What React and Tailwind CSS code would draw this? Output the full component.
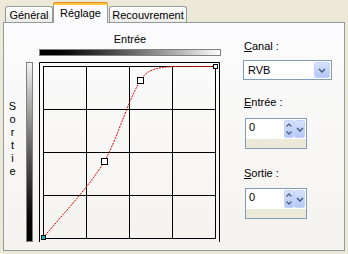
import React from "react";

function Chevron({ className = "" }) {
  return (
    <svg width="8" height="5" viewBox="0 0 8 5" className={className}>
      <path d="M1 1l3 3 3-3" fill="none" stroke="#4D6185" strokeWidth="1.6" />
    </svg>
  );
}

function UpDown() {
  return (
    <div className="w-[10px] h-[18px] my-[1px] flex flex-col items-center justify-around rounded-[2px] border border-[#C3D3FD] bg-gradient-to-b from-[#D8E3FC] to-[#B4C7F4]">
      <svg width="6" height="4" viewBox="0 0 6 4">
        <path d="M0.5 3.5l2.5-2.5 2.5 2.5" fill="none" stroke="#4D6185" strokeWidth="1.3" />
      </svg>
      <svg width="6" height="4" viewBox="0 0 6 4">
        <path d="M0.5 0.5l2.5 2.5 2.5-2.5" fill="none" stroke="#4D6185" strokeWidth="1.3" />
      </svg>
    </div>
  );
}

function Spin() {
  return (
    <div className="ml-[2px] w-[62px] h-[31px] border border-[#7F9DB9] flex flex-col">
      <div className="h-[20px] bg-white flex">
        <div className="flex-1 pl-[3px] pt-[2px]">0</div>
        <UpDown />
        <div className="w-[11px] h-[18px] my-[1px] mr-[1px] flex items-center justify-center rounded-[2px] border border-[#C3D3FD] bg-gradient-to-b from-[#D8E3FC] to-[#B4C7F4]">
          <Chevron />
        </div>
      </div>
      <div className="flex-1 bg-[#ECE9D8]" />
    </div>
  );
}

function Graph() {
  const grid = [4.5, 47.5, 90.5, 133.5, 176.5];
  return (
    <svg width="182" height="180" className="block mt-[6px]">
      <path d="M0.5 180V0.5H180.5V180" fill="none" stroke="#000" />
      {grid.map((v) => (
        <line key={"v" + v} x1={v} y1="4" x2={v} y2="177" stroke="#000" />
      ))}
      {grid.map((v) => (
        <line key={"h" + v} x1="4" y1={v} x2="177" y2={v} stroke="#000" />
      ))}
      <path
        d="M4 176C26 150 51 123 65.5 99.5C79 75 89 38 101.5 18.5C107 8 118 5 136 4.5L176 4.5"
        fill="none"
        stroke="#E00000"
        strokeDasharray="2 1"
      />
      <rect x="62.5" y="96.5" width="6" height="6" fill="#fff" stroke="#000" />
      <rect x="98.5" y="15.5" width="6" height="6" fill="#fff" stroke="#000" />
      <rect x="2.5" y="173.5" width="4" height="4" fill="#00B8C8" stroke="#000" />
      <rect x="174.5" y="2.5" width="4" height="4" fill="#fff" stroke="#000" />
    </svg>
  );
}

export default function App() {
  return (
    <div className="w-[348px] h-[254px] bg-[#ECE9D8] overflow-hidden font-['Liberation_Sans',Arial,sans-serif] text-[11px] leading-[13px] text-black">
      {/* Tabs */}
      <div className="flex items-end h-[22px] pl-[5px]">
        <div className="w-[48px] h-[16px] border border-b-0 border-[#919B9C] rounded-t-[3px] bg-gradient-to-b from-white to-[#ECEBE6] pt-[2px] text-center">
          Général
        </div>
        <div className="relative z-10 w-[55px] h-[21px] -mb-px border-x border-[#919B9C] rounded-t-[3px] bg-[#FCFCFE] text-center">
          <div className="h-[3px] -mx-px rounded-t-[3px] border-t border-[#E68B2C] bg-[#FFC73C]" />
          <div className="pt-[2px]">Réglage</div>
        </div>
        <div className="ml-[1px] w-[78px] h-[16px] border border-b-0 border-[#919B9C] rounded-t-[3px] bg-gradient-to-b from-white to-[#ECEBE6] pt-[2px] text-center">
          Recouvrement
        </div>
      </div>

      {/* Panel */}
      <div className="ml-[3px] w-[342px] h-[229px] border border-[#919B9C] bg-gradient-to-b from-[#FCFCFE] to-[#F4F3EE] flex">
        <div className="w-[17px] pt-[77px] flex flex-col items-center">
          {["S", "o", "r", "t", "i", "e"].map((c) => (
            <div key={c}>{c}</div>
          ))}
        </div>
        <div className="ml-[5px] mt-[39px] w-[7px] h-[180px] border border-[#808080] bg-gradient-to-b from-[#F4F4F4] to-black" />

        <div className="ml-[6px] w-[182px] flex flex-col">
          <div className="mt-[10px] text-center">Entrée</div>
          <div className="mt-[3px] h-[7px] border border-[#808080] bg-gradient-to-r from-black to-white" />
          <Graph />
        </div>

        <div className="ml-[22px] flex flex-col">
          <div className="mt-[17px] pl-[1px]">
            <span className="underline">C</span>anal :
          </div>
          <div className="mt-[7px] w-[89px] h-[20px] border border-[#7F9DB9] bg-white flex items-center">
            <div className="flex-1 pl-[4px]">RVB</div>
            <div className="w-[16px] h-[16px] mr-[1px] flex items-center justify-center rounded-[2px] border border-[#C3D3FD] bg-gradient-to-b from-[#D8E3FC] to-[#B4C7F4]">
              <Chevron />
            </div>
          </div>
          <div className="mt-[16px] pl-[1px]">
            <span className="underline">E</span>ntrée :
          </div>
          <div className="mt-[9px]">
            <Spin />
          </div>
          <div className="mt-[18px] pl-[1px]">
            <span className="underline">S</span>ortie :
          </div>
          <div className="mt-[8px]">
            <Spin />
          </div>
        </div>
      </div>
    </div>
  );
}
